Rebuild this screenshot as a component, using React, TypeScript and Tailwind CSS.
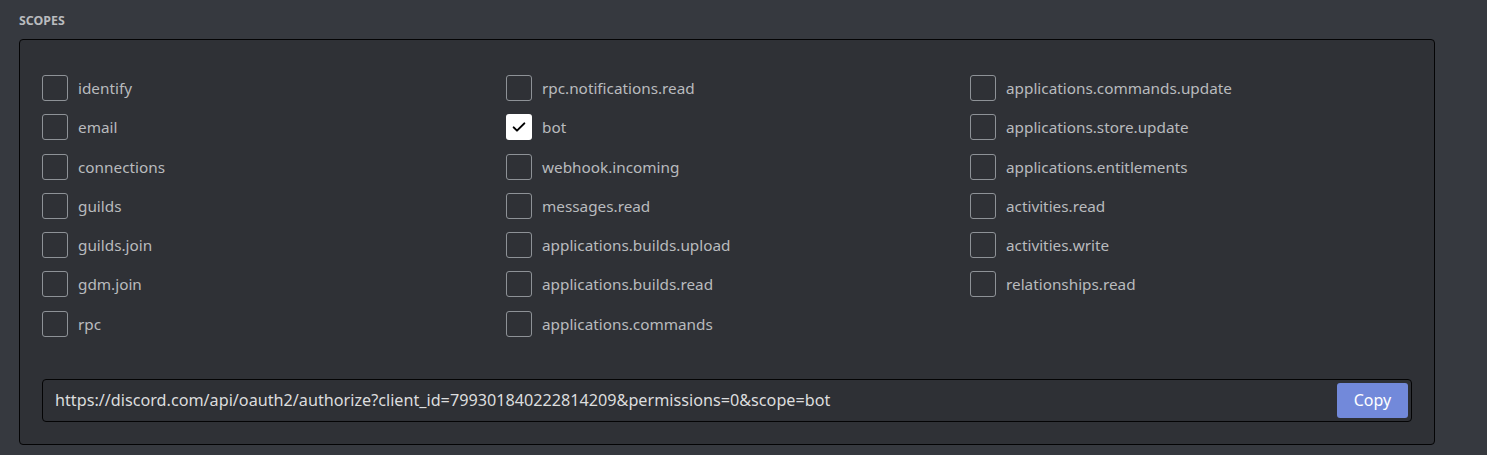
import React, { useState } from 'react'

const scopes: string[][] = [
  ['identify', 'email', 'connections', 'guilds', 'guilds.join', 'gdm.join', 'rpc'],
  [
    'rpc.notifications.read',
    'bot',
    'webhook.incoming',
    'messages.read',
    'applications.builds.upload',
    'applications.builds.read',
    'applications.commands',
  ],
  [
    'applications.commands.update',
    'applications.store.update',
    'applications.entitlements',
    'activities.read',
    'activities.write',
    'relationships.read',
  ],
]

const font = { fontFamily: '"Noto Sans", "Open Sans", sans-serif' }

const Check = ({ label, checked, onToggle }: { label: string; checked: boolean; onToggle: () => void }) => {
  return (
    <label className="flex h-[26px] cursor-pointer items-center" onClick={onToggle}>
      {checked ? (
        <span className="flex h-[26px] w-[26px] items-center justify-center rounded-[3px] bg-white">
          <svg width="16" height="16" viewBox="0 0 24 24" fill="none">
            <path d="M4 12.5l5 5L20 6.5" stroke="#000" strokeWidth="3" strokeLinecap="round" strokeLinejoin="round" />
          </svg>
        </span>
      ) : (
        <span className="h-[26px] w-[26px] rounded-[3px] border border-[#8e9297]" />
      )}
      <span className="ml-[10px] text-[15.3px] leading-5 text-[#b9bbbe]">{label}</span>
    </label>
  )
}

const App = () => {
  const [picked, setPicked] = useState<string[]>(['bot'])

  function toggle(name: string) {
    if (picked.includes(name)) setPicked(picked.filter((p) => p != name))
    else setPicked([...picked, name])
  }

  const url =
    'https://discord.com/api/oauth2/authorize?client_id=799301840222814209&permissions=0&scope=' +
    (picked.length ? picked.join('%20') : '')

  return (
    <div className="min-h-[455px] w-full bg-[#36393f] pl-[19px] pt-[13px]" style={font}>
      <div className="h-4 text-[12.4px] font-bold uppercase leading-4 text-[#b9bbbe]">Scopes</div>
      <div className="mt-[10px] w-[1416px] rounded-[4px] border border-[#040405] bg-[#2f3136] pb-[22px] pl-[22px] pt-[35px]">
        <div className="grid grid-cols-[464px_464px_1fr]">
          {scopes.map((col, ci) => (
            <div key={ci} className="flex flex-col gap-y-[13.3px]">
              {col.map((s) => (
                <Check key={s} label={s} checked={picked.includes(s)} onToggle={() => toggle(s)} />
              ))}
            </div>
          ))}
        </div>
        <div className="mt-[42px] flex h-[43px] w-[1370px] items-center justify-between rounded-[4px] border border-[#040405] bg-[#2e3035] pl-3 pr-[3px]">
          <span className="text-[16.2px] leading-5 text-[#dcddde]">{url}</span>
          <button className="h-[35px] w-[71px] rounded-[3px] bg-[#7289da] text-[16px] text-white">Copy</button>
        </div>
      </div>
    </div>
  )
}

export default App
